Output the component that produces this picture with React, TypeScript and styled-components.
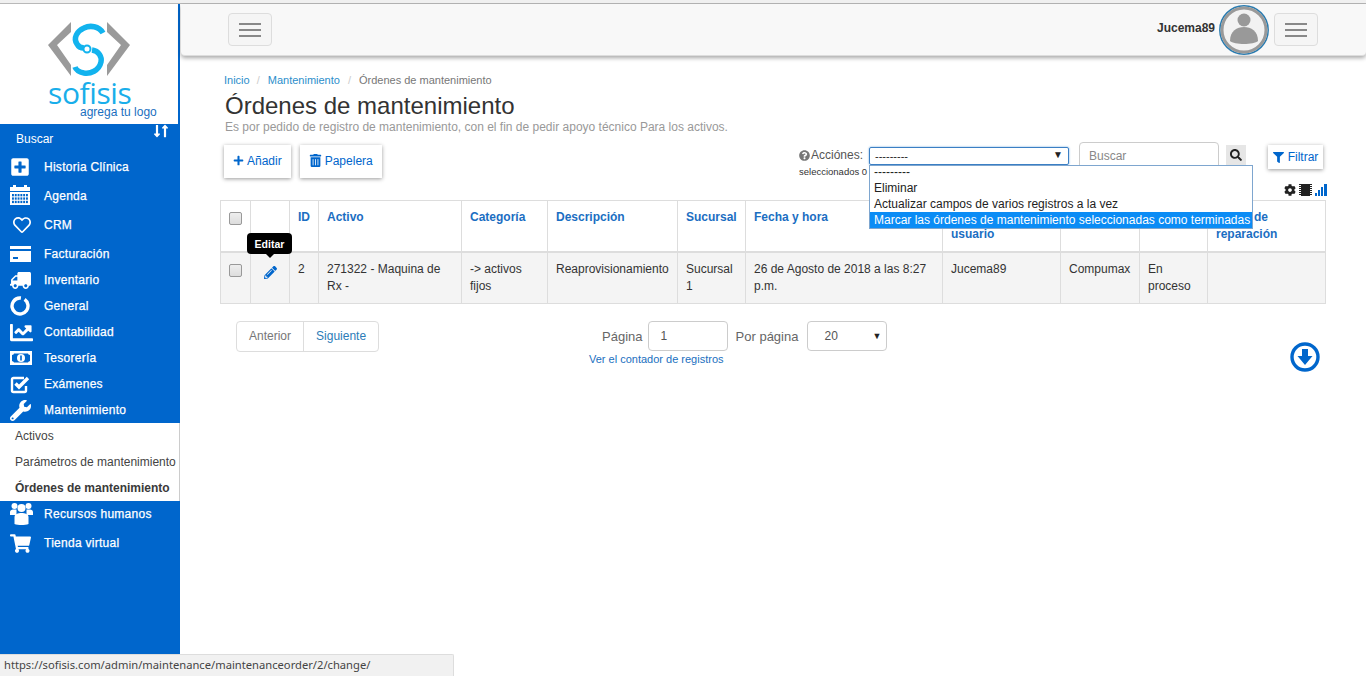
import React from "react";
import styled, { createGlobalStyle } from "styled-components";
import {
  FaPlusSquare, FaRegHeart, FaTruck, FaChartLine, FaWrench, FaShoppingCart,
  FaPlus, FaTrashAlt, FaQuestionCircle, FaSearch, FaFilter, FaCog, FaPencilAlt, FaLongArrowAltDown, FaLongArrowAltUp,
} from "react-icons/fa";

const Global = createGlobalStyle`
  html, body { margin: 0; padding: 0; height: 100%; background: #fff; overflow: hidden; }
  body { font-family: "Liberation Sans", Arial, sans-serif; font-size: 12px; color: #333; }
  * { box-sizing: border-box; }
`;

const BLUE = "#0066cc";
const HEAD = "#1b6ec2";
const Page = styled.div`
  width: 1366px; height: 676px; position: relative; overflow: hidden;
  border-top: 3px solid #f0f0f0; display: flex; padding-top: 1px; background: linear-gradient(#b9b9b9 1px, #fff 1px);
`;
const Side = styled.aside`
  width: 180px; flex: none; display: flex; flex-direction: column; background: ${BLUE};
`;
const LogoBox = styled.div`
  height: 120px; background: #fff; border-right: 2px solid ${BLUE}; display: flex; flex-direction: column; align-items: flex-start; padding: 17px 0 0 46px;
`;
const LogoName = styled.div`
  font-family: "Open Sans", sans-serif; font-size: 30px; line-height: 26px; color: #19aeea; margin: -1px 0 0 2px; letter-spacing: -0.4px;
`;
const LogoTag = styled.div`
  font-size: 12px; line-height: 12px; color: #1a6fc0; margin: 0 0 0 34px;
`;
const SearchRow = styled.div`
  height: 28px; display: flex; justify-content: space-between; color: #fff; padding: 8px 8px 0 16px; font-size: 12px;
`;
const Sort = styled.span`display: flex; margin-top: -8px; font-size: 12px;`;
const Item = styled.div<{ $h: number }>`
  height: ${p => p.$h}px; display: flex; align-items: center; color: #fff; font-size: 12px; font-weight: 400; -webkit-text-stroke: 0.25px #fff; letter-spacing: 0.27px;
`;
const IconCell = styled.span`
  width: 44px; flex: none; display: flex; justify-content: flex-start; padding-left: 10px; align-items: center;
`;
const Sub = styled.div`
  background: #fff; border-right: 1px solid #ccc;
`;
const SubItem = styled.div<{ $on?: boolean }>`
  height: 26px; line-height: 26px; padding-left: 15px; font-size: 12px; color: #444; white-space: nowrap;
  ${p => p.$on ? "font-weight: 700; color: #3a3a3a;" : ""}
`;
const Main = styled.main`
  flex: 1; min-width: 0; padding-left: 1px; display: flex; flex-direction: column;
`;
const TopBar = styled.header`
  height: 52px; background: #f8f8f8; border-radius: 0 0 4px 4px; box-shadow: 0 2px 4px rgba(0,0,0,.35); display: flex; align-items: center; padding: 0 48px 0 47px; flex: none; border-bottom: 1px solid #ddd;
`;
const Burger = styled.div`
  width: 44px; height: 33px; border: 1px solid #ddd; border-radius: 4px; background: #f5f5f5; display: flex; flex-direction: column; justify-content: center; align-items: center; gap: 4px;
  i { display: block; width: 22px; height: 2px; background: #888; }
`;
const Spacer = styled.div`flex: 1;`;
const UserName = styled.div`font-size: 12px; font-weight: 700; color: #333; margin: -3px 4px 0 0;`;
const Avatar = styled.div`
  width: 50px; height: 50px; display: flex; align-items: center; justify-content: center; margin-right: 5px;
`;
const Content = styled.div`
  padding: 0 40px 0 39px; flex: 1; position: relative;
`;
const Crumbs = styled.div`
  display: flex; gap: 8px; font-size: 11px; margin: 17px 0 0 4px; height: 14px; color: #777; line-height: 14px;
  a { color: #2b8ecb; } a:first-child { margin-right: -1px; } span { color: #ccc; }
`;
const H1 = styled.h1`
  margin: 5px 0 0 5px; font-size: 24px; line-height: 28px; font-weight: 400; color: #333;
`;
const Subtitle = styled.div`
  margin: 0 0 0 5px; font-size: 12px; line-height: 14px; color: #999;
`;
const ToolRow = styled.div`
  display: flex; margin-top: 11px; height: 55px; position: relative; padding-left: 4px;
`;
const Btn = styled.div`
  height: 33px; display: flex; align-items: center; gap: 3px; padding: 0 9px 2px; background: #fff; color: ${BLUE}; font-size: 12px; box-shadow: 0 1px 4px rgba(0,0,0,.4); margin: 0 9px 0 0;
`;
const ActionBox = styled.div`
  position: absolute; left: 579px; top: 0; width: 530px; height: 40px;
`;
const ActionLabel = styled.span`
  position: absolute; left: 0; top: 3px; display: flex; align-items: center; gap: 1px; color: #555; font-size: 12px; line-height: 15px;
`;
const SelCount = styled.span`position: absolute; left: 0; top: 21px; font-size: 9.5px; color: #333;`;
const Sel = styled.div`
  position: absolute; left: 70px; top: 2px; width: 200px; height: 18px; border: 1px solid #3b7fc4; border-radius: 2px; box-shadow: 0 0 2px #5b9dd9; display: flex; align-items: center; padding-left: 5px; font-size: 11px; color: #222;
  b { position: absolute; right: 5px; top: 1px; font-size: 10px; font-weight: 400; color: #222; }
`;
const Drop = styled.div`
  position: absolute; left: 70px; top: 20px; width: 384px; height: 64px; background: #fff; border: 1px solid #7ea6cf; z-index: 5; font-size: 12px; color: #222;
`;
const Opt = styled.div<{ $on?: boolean }>`
  height: 16px; line-height: 17px; padding-left: 4px; white-space: nowrap;
  &:first-child { height: 14px; line-height: 13px; }
  ${p => p.$on ? "background:#0b8cf5;color:#fff;" : ""}
`;
const Search = styled.div`
  position: absolute; left: 280px; top: -3px; width: 140px; height: 24px; border: 1px solid #ccc; border-radius: 4px 4px 0 0; padding: 6px 9px; color: #888; font-size: 12px; line-height: 14px;
`;
const SearchBtn = styled.div`
  position: absolute; left: 427px; top: 0; width: 20px; height: 20px; background: #e6e6e6; display: flex; align-items: center; justify-content: center; color: #222;
`;
const FilterBtn = styled.div`
  position: absolute; left: 469px; top: 0; height: 24px; width: 55px; display: flex; align-items: center; justify-content: center; gap: 4px; color: ${BLUE}; font-size: 12px; background: #fff; box-shadow: 0 1px 4px rgba(0,0,0,.4);
`;
const Mini = styled.div`
  position: absolute; left: 485px; top: 39px; width: 44px; display: flex; gap: 3px; align-items: center;
  svg { flex: none; }
`;
const Table = styled.table`
  width: 1105px; border-collapse: collapse; table-layout: fixed; font-size: 12px; margin-top: 0;
  th, td { border: 1px solid #ddd; padding: 8px; vertical-align: top; line-height: 17px; text-align: left; }
  th { color: ${HEAD}; font-weight: 700; height: 50px; border-bottom-width: 2px; }
  td { background: #f4f4f4; height: 51px; color: #333; }
`;
const Check = styled.span`
  display: block; width: 13px; height: 13px; margin-top: 3px; border: 1px solid #999; border-radius: 2px; background: linear-gradient(#eee, #ddd);
`;
const EditCell = styled.div`display: flex; justify-content: center; padding-top: 5px;`;
const Tip = styled.div`
  position: absolute; left: 66px; top: 177px; height: 21px; width: 45px; background: #000; color: #fff; font-size: 10.5px; font-weight: 700; border-radius: 4px; display: flex; align-items: center; justify-content: center; z-index: 4;
  &::after { content: ""; position: absolute; left: 50%; margin-left: -4px; bottom: -4px; border: 4px solid transparent; border-bottom: 0; border-top-color: #000; }
`;
const Pager = styled.div`
  display: flex; position: relative; height: 60px; margin-top: 17px;
`;
const PageBtns = styled.div`
  margin-left: 16px; display: flex; height: 31px; border: 1px solid #ddd; border-radius: 4px; font-size: 12px; flex: none;
`;
const PageBtn = styled.span<{ $link?: boolean }>`
  padding: 0 12px; line-height: 29px; color: ${p => p.$link ? "#2b7cb8" : "#777"}; ${p => p.$link ? "" : "border-right: 1px solid #ddd;"}
`;
const PageCtl = styled.div`
  margin-left: 223px; display: flex; align-items: center; height: 30px; gap: 5px; color: #666; font-size: 13px;
`;
const Field = styled.div`
  width: 80px; height: 30px; border: 1px solid #ccc; border-radius: 4px; padding: 0 12px; line-height: 28px; color: #555; font-size: 12px; margin-right: 3px;
`;
const SelField = styled(Field)`
  margin: 0 0 0 4px; padding-left: 16px; position: relative;
  b { position: absolute; right: 5px; top: 0; font-size: 9px; font-weight: 400; color: #222; }
`;
const Counter = styled.a`
  position: absolute; left: 369px; top: 32px; font-size: 11px; color: #1a6fc0; white-space: nowrap;
`;
const DownBtn = styled.div`
  position: absolute; right: 6px; top: 21px; display: flex;
`;
const Status = styled.div`
  position: absolute; left: 0; bottom: 0; width: 454px; height: 22px; background: #f1f1f1; border-top: 1px solid #ddd; border-right: 1px solid #ddd; border-top-right-radius: 2px; padding-left: 4px; font-family: "Noto Sans", sans-serif; font-size: 11.2px; line-height: 20px; color: #444; z-index: 9; white-space: nowrap;
`;

const Calendar = () => (
  <svg width="20" height="22" viewBox="0 0 20 22" fill="#fff">
    <rect x="0" y="2" width="20" height="4" />
    <rect x="3" y="0" width="3" height="2" /><rect x="14" y="0" width="3" height="2" />
    <rect x="0" y="7" width="20" height="13" />
    {[0, 1, 2].map(r => [0, 1, 2, 3, 4, 5].map(c => <rect key={r + "-" + c} x={2 + c * 2.8} y={9 + r * 3.4} width="1.9" height="2.3" fill={BLUE} />))}
  </svg>
);
const Card = () => (
  <svg width="21" height="16" viewBox="0 0 21 16" fill="#fff">
    <rect x="0" y="0" width="21" height="3" /><rect x="0" y="5" width="21" height="11" /><rect x="3" y="11" width="5" height="2" fill={BLUE} />
  </svg>
);
const Ring = () => (
  <svg width="20" height="20" viewBox="0 0 20 20" fill="none" stroke="#fff" strokeWidth="3.4">
    <circle cx="10" cy="10" r="8" strokeDasharray="46 4.3" transform="rotate(-55 10 10)" />
  </svg>
);
const Bill = () => (
  <svg width="22" height="14" viewBox="0 0 22 14" fill="#fff">
    <path fillRule="evenodd" d="M0 0H22V14H0ZM4 2.5Q4 3.5 2 4V10Q4 10.5 4 11.5H18Q18 10.5 20 10V4Q18 3.5 18 2.5Z" />
    <circle cx="11" cy="7" r="4" />
    <rect x="10.2" y="4.5" width="1.6" height="5" fill={BLUE} />
  </svg>
);
const CheckBox = () => (
  <svg width="20" height="19" viewBox="0 0 20 19">
    <path d="M14 3H3.5A1.5 1.5 0 0 0 2 4.5V15.5A1.5 1.5 0 0 0 3.5 17H14.5A1.5 1.5 0 0 0 16 15.5V11" fill="none" stroke="#fff" strokeWidth="2.4" />
    <path d="M5.5 8.5L9 12L18 3" fill="none" stroke="#fff" strokeWidth="3.4" />
  </svg>
);
const People = () => (
  <svg width="23" height="23" viewBox="0 0 23 23" fill="#fff">
    <circle cx="4.5" cy="4" r="3" /><circle cx="18.5" cy="4" r="3" />
    <path d="M0 13V10C0 8 2 7.5 4.5 7.5H6.5V13Z" /><path d="M23 13V10C23 8 21 7.5 18.5 7.5H16.5V13Z" />
    <circle cx="11.5" cy="6" r="4" />
    <path d="M4.5 22V15C4.5 12 8 11 11.5 11C15 11 18.5 12 18.5 15V22C15 23.3 8 23.3 4.5 22Z" />
  </svg>
);
const Chip = () => (
  <svg width="13" height="12" viewBox="0 0 13 12" fill="#222">
    <rect x="2" y="0" width="9" height="12" />
    {[0, 2, 4, 6, 8, 10].map(y => <g key={y}><rect x="0" y={y} width="13" height="1" /></g>)}
  </svg>
);
const Bars = () => (
  <svg width="12" height="12" viewBox="0 0 12 12" fill={BLUE}>
    <rect x="0" y="9" width="2" height="3" /><rect x="3" y="6" width="2" height="6" /><rect x="6" y="3" width="2" height="9" /><rect x="9" y="0" width="3" height="12" />
  </svg>
);
const DownCircle = () => (
  <svg width="30" height="30" viewBox="0 0 30 30">
    <circle cx="15" cy="15" r="13" fill="#fff" stroke={BLUE} strokeWidth="3.4" />
    <path d="M12 7H18V14H22.5L15 23L7.5 14H12Z" fill={BLUE} />
  </svg>
);
const LogoMark = () => (
  <svg width="86" height="60" viewBox="0 0 86 60" style={{ display: "block" }}>
    <path d="M25 1L2 24L25 55V44L11 24L25 11Z" fill="#9a9a9a" />
    <path d="M61 1L84 24L61 55V44L75 24L61 11Z" fill="#9a9a9a" />
    <path d="M57 12C53 5 44 4 38 7C31 10 27 17 31 23C33 27 36 27 38 27" fill="none" stroke="#12b3ee" strokeWidth="5.5" />
    <path d="M46 29C53 30 56 36 55 41C53 50 44 53 38 52C33 51 30 49 29 46" fill="none" stroke="#12b3ee" strokeWidth="5.5" />
    <circle cx="41" cy="28" r="3.5" fill="none" stroke="#12b3ee" strokeWidth="2" />
  </svg>
);
const UserPic = () => (
  <svg width="50" height="50" viewBox="0 0 50 50">
    <circle cx="25" cy="25" r="24.2" fill="#f2f2f2" stroke="#2b7cb0" strokeWidth="1.5" />
    <circle cx="25" cy="25" r="22" fill="none" stroke="#999" strokeWidth="3" />
    <circle cx="25" cy="15" r="6.5" fill="#999" />
    <path d="M11 36C11 26 18 22 25 22C32 22 39 26 39 36C35 40 15 40 11 36Z" fill="#999" />
  </svg>
);

const Flip = styled.span`display: flex; transform: scaleX(-1);`;
const HeartWrap = styled.span`display: flex; margin-left: 3px;`;

const menu: [string, React.ReactNode, number][] = [
  ["Historia Clínica", <FaPlusSquare size={20} />, 29],
  ["Agenda", <Calendar />, 29],
  ["CRM", <HeartWrap><FaRegHeart size={18} /></HeartWrap>, 29],
  ["Facturación", <Card />, 29],
  ["Inventario", <Flip><FaTruck size={21} /></Flip>, 24],
  ["General", <Ring />, 27],
  ["Contabilidad", <FaChartLine size={23} />, 26],
  ["Tesorería", <Bill />, 26],
  ["Exámenes", <CheckBox />, 26],
  ["Mantenimiento", <FaWrench size={21} />, 26],
];

const heads = ["", "", "ID", "Activo", "Categoría", "Descripción", "Sucursal", "Fecha y hora", "Nombre de usuario", "Proveedor", "Estado", "Fecha de reparación"];
const widths = [30, 39, 29, 143, 86, 130, 68, 197, 118, 79, 68, 118];
const cells = ["2", "271322 - Maquina de Rx -", "-> activos fijos", "Reaprovisionamiento", "Sucursal 1", "26 de Agosto de 2018 a las 8:27 p.m.", "Jucema89", "Compumax", "En proceso", ""];

export default function App() {
  return (
    <Page>
      <Global />
      <Side>
        <LogoBox>
          <LogoMark />
          <LogoName>sofisis</LogoName>
          <LogoTag>agrega tu logo</LogoTag>
        </LogoBox>
        <SearchRow>
          <span>Buscar</span>
          <Sort><FaLongArrowAltDown size={14} style={{ marginRight: -6 }} /><FaLongArrowAltUp size={14} /></Sort>
        </SearchRow>
        {menu.map(([t, ic, h]) => (
          <Item key={t} $h={h}><IconCell>{ic}</IconCell>{t}</Item>
        ))}
        <Sub>
          <SubItem>Activos</SubItem>
          <SubItem>Parámetros de mantenimiento</SubItem>
          <SubItem $on>Órdenes de mantenimiento</SubItem>
        </Sub>
        <Item $h={25}><IconCell><People /></IconCell>Recursos humanos</Item>
        <Item $h={34}><IconCell><FaShoppingCart size={21} /></IconCell>Tienda virtual</Item>
      </Side>
      <Main>
        <TopBar>
          <Burger><i /><i /><i /></Burger>
          <Spacer />
          <UserName>Jucema89</UserName>
          <Avatar><UserPic /></Avatar>
          <Burger><i /><i /><i /></Burger>
        </TopBar>
        <Content>
          <Crumbs><a>Inicio</a><span>/</span><a>Mantenimiento</a><span>/</span>Órdenes de mantenimiento</Crumbs>
          <H1>Órdenes de mantenimiento</H1>
          <Subtitle>Es por pedido de registro de mantenimiento, con el fin de pedir apoyo técnico Para los activos.</Subtitle>
          <ToolRow>
            <Btn><FaPlus size={11} /> Añadir</Btn>
            <Btn><FaTrashAlt size={13} /> Papelera</Btn>
            <ActionBox>
              <ActionLabel><FaQuestionCircle size={11} color="#777" />Acciónes:</ActionLabel>
              <SelCount>seleccionados 0</SelCount>
              <Sel>---------<b>▼</b></Sel>
              <Drop>
                <Opt>---------</Opt>
                <Opt>Eliminar</Opt>
                <Opt>Actualizar campos de varios registros a la vez</Opt>
                <Opt $on>Marcar las órdenes de mantenimiento seleccionadas como terminadas</Opt>
              </Drop>
              <Search>Buscar</Search>
              <SearchBtn><FaSearch size={12} /></SearchBtn>
              <FilterBtn><FaFilter size={11} />Filtrar</FilterBtn>
              <Mini><FaCog size={12} color="#222" /><Chip /><Bars /></Mini>
            </ActionBox>
          </ToolRow>
          <Tip>Editar</Tip>
          <Table>
            <colgroup>{widths.map((w, i) => <col key={i} style={{ width: w }} />)}</colgroup>
            <thead>
              <tr>{heads.map((h, i) => <th key={i}>{i === 0 ? <Check /> : h}</th>)}</tr>
            </thead>
            <tbody>
              <tr>
                <td><Check /></td>
                <td><EditCell><FaPencilAlt size={13} color={BLUE} /></EditCell></td>
                {cells.map((c, i) => <td key={i}>{c}</td>)}
              </tr>
            </tbody>
          </Table>
          <Pager>
            <PageBtns><PageBtn>Anterior</PageBtn><PageBtn $link>Siguiente</PageBtn></PageBtns>
            <PageCtl>Página<Field>1</Field>Por página<SelField>20<b>▼</b></SelField></PageCtl>
            <Counter>Ver el contador de registros</Counter>
            <DownBtn><DownCircle /></DownBtn>
          </Pager>
        </Content>
      </Main>
      <Status>https://sofisis.com/admin/maintenance/maintenanceorder/2/change/</Status>
    </Page>
  );
}
